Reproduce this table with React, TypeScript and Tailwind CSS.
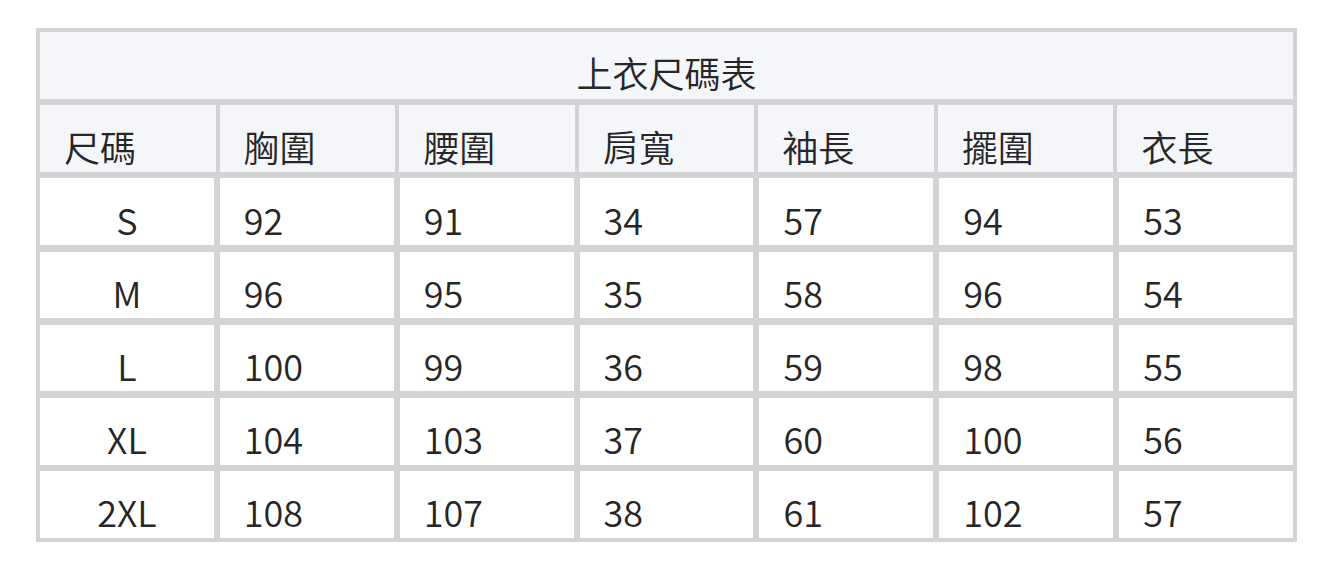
const columns = ['尺碼', '胸圍', '腰圍', '肩寬', '袖長', '擺圍', '衣長']

const rows: string[][] = [
  ['S', '92', '91', '34', '57', '94', '53'],
  ['M', '96', '95', '35', '58', '96', '54'],
  ['L', '100', '99', '36', '59', '98', '55'],
  ['XL', '104', '103', '37', '60', '100', '56'],
  ['2XL', '108', '107', '38', '61', '102', '57'],
]

const font = { fontFamily: '"Noto Sans CJK TC", "Noto Sans", sans-serif' }

export default function App() {
  return (
    <div className="min-h-[569px] bg-white pt-[28px] pl-[36px]" style={font}>
      <div className="w-[1261px] bg-[#d3d3d3] p-[4px] flex flex-col gap-[6.5px] text-[36px] leading-[36px] font-[350] text-[#262626]">
        {/* title */}
        <div className="h-[66.7px] bg-[#f5f6fa] flex items-center justify-center pt-[14px]">
          上衣尺碼表
        </div>

        {/* header */}
        <div className="h-[66.7px] grid grid-cols-7 gap-[4px]">
          {columns.map((c) => (
            <div key={c} className="bg-[#f5f6fa] flex items-center pl-6 pt-[14px]">
              {c}
            </div>
          ))}
        </div>

        {rows.map((r) => (
          <div key={r[0]} className="h-[66.7px] grid grid-cols-7 gap-[6px]">
            {r.map((v, i) => (
              <div
                key={i}
                className={`bg-white flex items-center pt-[14px] ${i === 0 ? 'justify-center' : 'pl-6'}`}
              >
                {v}
              </div>
            ))}
          </div>
        ))}
      </div>
    </div>
  )
}
